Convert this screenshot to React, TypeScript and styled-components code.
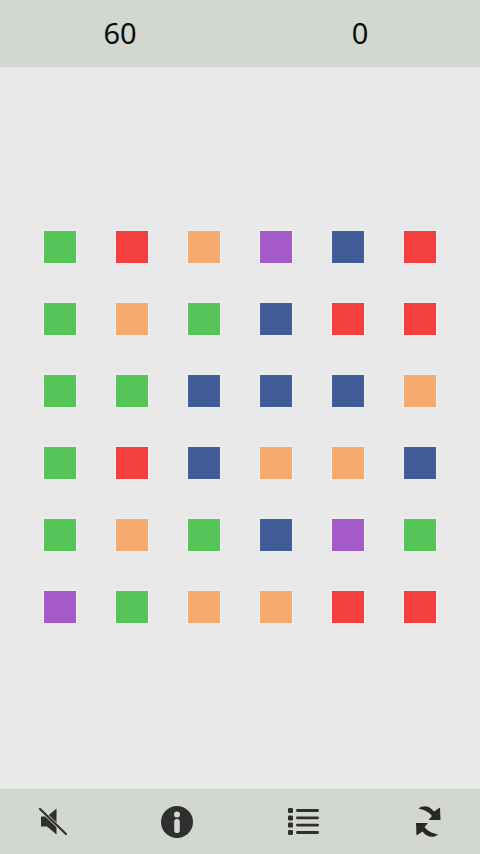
import styled, { createGlobalStyle } from "styled-components";

const GlobalStyle = createGlobalStyle`
  html, body {
    margin: 0;
    padding: 0;
    background: #e9e9e9;
  }
`;

const colors: Record<string, string> = {
  g: "#56c559",
  r: "#f43f3f",
  o: "#f5ab6e",
  p: "#a55aca",
  b: "#405c96",
};

const board = ["gropbr", "gogbrr", "ggbbbo", "grboob", "gogbpg", "pgoorr"];

const Page = styled.div`
  width: 480px;
  height: 854px;
  display: flex;
  flex-direction: column;
  background: #e9e9e9;
  overflow: hidden;
`;

const ScoreBar = styled.div`
  height: 67px;
  display: grid;
  grid-template-columns: 1fr 1fr;
  background: #d2d7d0;
`;

const Score = styled.div`
  text-align: center;
  font-family: "Noto Sans", "Open Sans", sans-serif;
  font-size: 29px;
  line-height: 66px;
  color: #0c0c0c;
`;

const Board = styled.div`
  flex: 1;
  display: flex;
  align-items: center;
  justify-content: center;
  padding-bottom: 1px;
`;

const Grid = styled.div`
  display: grid;
  grid-template-columns: repeat(6, 72px);
  grid-auto-rows: 72px;
  place-items: center;
`;

const Tile = styled.div<{ $color: string }>`
  width: 32px;
  height: 32px;
  background: ${(props) => props.$color};
  box-shadow: 0 0 0 1px rgba(255, 255, 255, 0.25);
`;

const Toolbar = styled.div`
  height: 66px;
  display: grid;
  grid-template-columns: repeat(4, 1fr);
  align-items: center;
  justify-items: center;
  background: #d2d7d0;
  border-top: 1px solid #dfe2de;
  box-sizing: border-box;
`;

const IconButton = styled.button<{ $shift?: number }>`
  width: 40px;
  height: 40px;
  padding: 0;
  border: 0;
  background: none;
  display: flex;
  align-items: center;
  justify-content: center;
  transform: translateX(${(props) => props.$shift ?? 0}px);
`;

function MuteIcon() {
  return (
    <svg width="30" height="30" viewBox="0 0 30 30">
      <path d="M3 9.5H9L18.5 1.5V27.5L9 19.5H3Z" fill="#2f2f2f" />
      <path d="M2 2L28 27" stroke="#d2d7d0" strokeWidth="3.6" />
      <path d="M2 2L28 27" stroke="#2f2f2f" strokeWidth="2.2" strokeLinecap="round" />
    </svg>
  );
}

function InfoIcon() {
  return (
    <svg width="32" height="32" viewBox="0 0 32 32">
      <circle cx="16" cy="16" r="16" fill="#2f2f2f" />
      <circle cx="16" cy="8.5" r="3" fill="#d2d7d0" />
      <rect x="13.2" y="13" width="5.6" height="14" rx="2.8" fill="#d2d7d0" />
    </svg>
  );
}

function ListIcon() {
  return (
    <svg width="31" height="30" viewBox="0 0 31 30" fill="#2f2f2f">
      <rect x="0" y="1" width="5" height="5" rx="1.2" />
      <rect x="8" y="2.1" width="23" height="2.8" rx="1.4" />
      <rect x="0" y="8.4" width="5" height="5" rx="1.2" />
      <rect x="8" y="9.5" width="23" height="2.8" rx="1.4" />
      <rect x="0" y="15.6" width="5" height="5" rx="1.2" />
      <rect x="8" y="16.7" width="23" height="2.8" rx="1.4" />
      <rect x="0" y="23" width="5" height="5" rx="1.2" />
      <rect x="8" y="24.1" width="23" height="2.8" rx="1.4" />
    </svg>
  );
}

function RefreshIcon() {
  const arrow = "M17.5 13.5C22 10 28 10 33 16.5L39 12.5L39.5 25L27.5 25L31 21C27 16 22 14.5 17.5 13.5Z";
  return (
    <svg width="27" height="37" viewBox="14 8 27 37" fill="#2c2724">
      <path d={arrow} />
      <path d={arrow} transform="rotate(180 27.25 26.5)" />
    </svg>
  );
}

export default function App() {
  return (
    <Page>
      <GlobalStyle />
      <ScoreBar>
        <Score>60</Score>
        <Score>0</Score>
      </ScoreBar>
      <Board>
        <Grid>
          {board.flatMap((row, y) =>
            row.split("").map((c, x) => <Tile key={`${y}-${x}`} $color={colors[c]} />)
          )}
        </Grid>
      </Board>
      <Toolbar>
        <IconButton $shift={-7}>
          <MuteIcon />
        </IconButton>
        <IconButton $shift={-3}>
          <InfoIcon />
        </IconButton>
        <IconButton $shift={3}>
          <ListIcon />
        </IconButton>
        <IconButton $shift={8}>
          <RefreshIcon />
        </IconButton>
      </Toolbar>
    </Page>
  );
}
